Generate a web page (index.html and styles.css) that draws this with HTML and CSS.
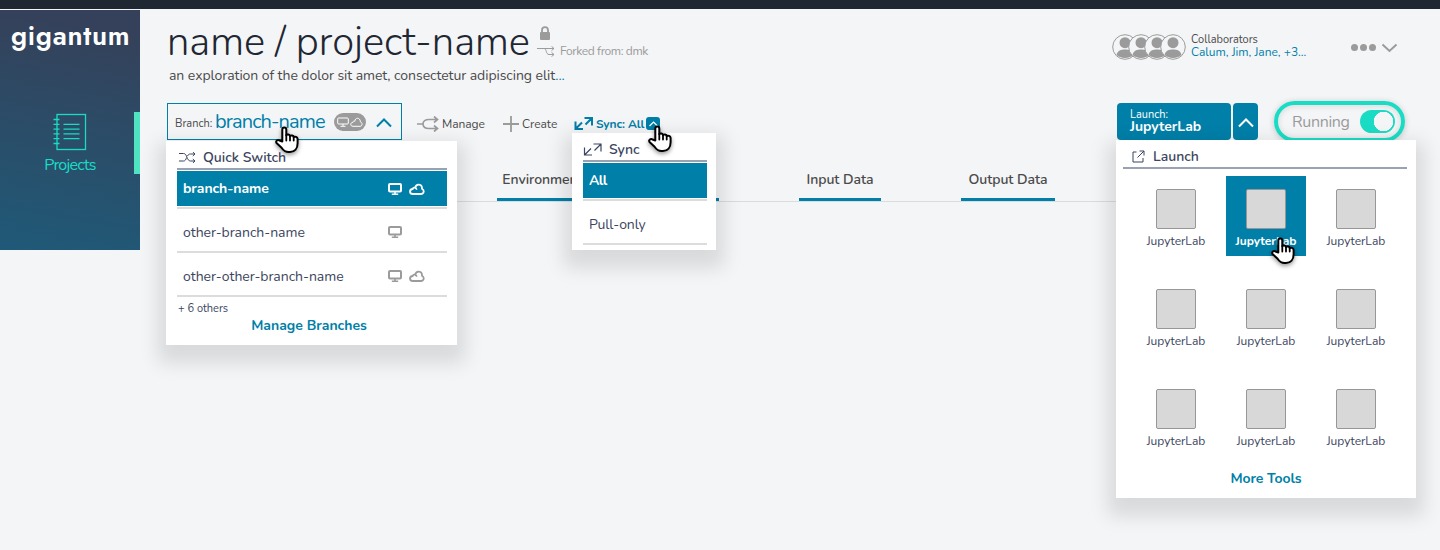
FILE: index.html
```html
<!DOCTYPE html>
<html lang="en">
<head>
<meta charset="utf-8">
<title>Gigantum</title>
<link rel="stylesheet" href="styles.css">
</head>
<body>
<svg class="defs" width="0" height="0">
  <symbol id="hand" viewBox="0 0 28 32"><path d="M8.300 15.500V3.400a2 2 0 0 1 4 0V9.200c1-1.300 3.400-1 3.700.8 1.200-1 3.400-.6 3.700 1 1.300-.7 3.700-.2 3.900 1.900v4.300c0 5.200-3 8.800-7.700 8.800h-1.300c-3.300 0-5.400-1.800-7-4.300L2.500 17c-1.200-2 1.300-4 3-2.500z" fill="#fff" stroke="#000" stroke-width="2" stroke-linejoin="round"/><path d="M12.300 9v5.500M16 10v4.500M19.700 11v3.500" stroke="#000" stroke-width="1.800" stroke-linecap="round"/></symbol>
  <symbol id="screen" viewBox="0 0 14 12"><rect x="1" y="1" width="12" height="7.500" rx="1" fill="none" stroke="currentColor" stroke-width="2"/><path d="M7 8v3M3.800 11.200h6.400" stroke="currentColor" stroke-width="1.600"/></symbol>
  <symbol id="cloud" viewBox="0 0 16 12"><path d="M4 11c-3.800 0-4-4.700-.3-5C4 4.800 5 4.200 6.200 4.800 7 .300 13.200.300 13 5.800c2.700 1.400 2 5.200-1 5.200z" fill="none" stroke="currentColor" stroke-width="1.800"/><path d="M6.200 4.800c1 .3 1.500 1 1.500 2" fill="none" stroke="currentColor" stroke-width="1.500"/></symbol>
  <symbol id="user" viewBox="0 0 26 26"><circle cx="13" cy="13" r="12.300" fill="#f4f5f7" stroke="#9b9b9b" stroke-width="1"/><circle cx="13" cy="8.700" r="5.500"/><path d="M4.500 21c1-4.500 4.500-5.500 8.500-5.500s7.500 1 8.500 5.500c-4.500 4-12.500 4-17 0z"/></symbol>
  <symbol id="arrows" viewBox="0 0 19 13"><path d="M1.500 4.500V12H9M1.500 12l6.500-6.500M10.500 1H18v7.500M18 1l-6.500 6.500" fill="none" stroke="currentColor"/></symbol>
</svg>
<div class="topbar"></div>
<div class="page">
  <nav class="side">
    <div class="logo">gigantum</div>
    <div class="side-item">
      <svg width="34" height="38" viewBox="0 0 34 38" fill="none" stroke="#1adcc4" stroke-width="1.300"><rect x="4" y="1.500" width="28.500" height="35"/><path d="M.5 6.500h6M.5 11.300h6M.5 16.100h6M.5 20.900h6M.5 25.700h6M.5 30.500h6M10.500 11.300h16M10.500 16.100h16M10.500 20.900h16M10.500 25.700h16"/></svg>
      <span>Projects</span>
    </div>
  </nav>
  <main>
    <header>
      <div class="titles">
        <div class="title-row">
          <h1>name / project-name</h1>
          <div class="meta">
            <svg class="lock" width="12" height="15" viewBox="0 0 12 15"><rect x="1" y="6" width="10" height="8" rx="1" fill="#9b9b9b"/><path d="M3 7V4.200a3 3 0 0 1 6 0V7" fill="none" stroke="#9b9b9b" stroke-width="1.800"/></svg>
            <div class="fork"><svg width="18" height="11" viewBox="0 0 18 11" fill="none" stroke="#9b9b9b"><path d="M0 2.500h17M14.500.3L17 2.500l-2.500 2.200M7 2.500c3 0 1.500 6 5 6h5M14.500 6.300L17 8.500l-2.500 2.200"/></svg><span>Forked from: dmk</span></div>
          </div>
        </div>
        <p class="desc">an exploration of the dolor sit amet, consectetur adipiscing elit<a>...</a></p>
      </div>
      <div class="people">
        <div class="avatars"><svg><use href="#user"/></svg><svg><use href="#user"/></svg><svg><use href="#user"/></svg><svg><use href="#user"/></svg></div>
        <div class="names"><span class="collab">Collaborators</span><a>Calum, Jim, Jane, +3...</a></div>
        <svg class="more" width="48" height="12" viewBox="0 0 48 12" fill="#9b9b9b"><circle cx="4.500" cy="5.500" r="3.500"/><circle cx="13.500" cy="5.500" r="3.500"/><circle cx="22.500" cy="5.500" r="3.500"/><path d="M32.500 2.500L39.500 9l7-6.500" fill="none" stroke="#9b9b9b" stroke-width="2"/></svg>
      </div>
    </header>
    <div class="toolbar">
      <div class="branch">
        <span class="blabel">Branch:</span><span class="bname">branch-name</span>
        <span class="pill"><svg width="12" height="10" viewBox="0 0 12 10" fill="none" stroke="#fff"><rect x=".7" y="1" width="10.600" height="6" rx="1"/><path d="M6 7v2M3.500 9.300h5"/></svg><svg width="13" height="10" viewBox="0 0 13 10" fill="none" stroke="#fff"><path d="M3 9.300C0 9.300 0 5.500 3 5.300 3 4.200 4 4 4.800 4.300 5 0 10.500.300 10.300 4.800c2.600.8 2.200 4.500-.3 4.500z"/></svg></span>
        <svg class="bchev" width="16" height="10" viewBox="0 0 16 10" fill="none" stroke="#007fa8" stroke-width="2"><path d="M1 8.500l7-7 7 7"/></svg>
        <section class="menu quick">
          <h2 class="mhead"><svg width="17" height="11" viewBox="0 0 17 11" fill="none" stroke="#3b4560"><path d="M0 1.500h4.500c4 0 3 7.500 7 7.500H16M0 9h4.500c1.800 0 2.500-1.500 3-3.500M8.500 4c.8-1.500 1.500-2 3-2H16M13.800 0L16 2l-2.200 2M13.800 7L16 9l-2.200 2"/></svg><span>Quick Switch</span></h2>
          <div class="opt on"><span>branch-name</span><svg class="ic"><use href="#screen"/></svg><svg class="ic c"><use href="#cloud"/></svg></div>
          <div class="opt"><span>other-branch-name</span><svg class="ic"><use href="#screen"/></svg><i class="c"></i></div>
          <div class="opt"><span>other-other-branch-name</span><svg class="ic"><use href="#screen"/></svg><svg class="ic c"><use href="#cloud"/></svg></div>
          <p class="others">+ 6 others</p>
          <a class="link">Manage Branches</a>
        </section>
        <svg class="hand h1c"><use href="#hand"/></svg>
      </div>
      <div class="act manage"><svg width="22" height="16" viewBox="0 0 22 16" fill="none" stroke="#9b9b9b" stroke-width="1.700"><path d="M0 8h6M20 3.500h-8c-3.500 0-6 1.500-6 4.500s2.500 4.500 6 4.500h8M17 .500l3.500 3-3.500 3M17 9.500l3.500 3-3.500 3"/></svg><span>Manage</span></div>
      <div class="act create"><svg width="16" height="16" viewBox="0 0 16 16" stroke="#9b9b9b" stroke-width="1.800"><path d="M8 0v16M0 8h16"/></svg><span>Create</span></div>
      <div class="act sync"><svg width="19" height="13" stroke-width="2"><use href="#arrows"/></svg><span>Sync: All</span><b class="sq"><svg width="9" height="6" viewBox="0 0 9 6" fill="none" stroke="#fff" stroke-width="1.200"><path d="M.5 5l4-4 4 4"/></svg></b>
        <section class="menu syncmenu">
          <h2 class="mhead"><svg width="19" height="13" stroke-width="1.200"><use href="#arrows"/></svg><span>Sync</span></h2>
          <div class="opt on"><span>All</span></div>
          <div class="opt"><span>Pull-only</span></div>
        </section>
        <svg class="hand h2c"><use href="#hand"/></svg>
      </div>
      <div class="launch">
        <div class="lbtn"><span class="l1">Launch:</span><span class="l2">JupyterLab</span></div>
        <div class="lchev"><svg width="16" height="10" viewBox="0 0 16 10" fill="none" stroke="#fff" stroke-width="2"><path d="M1 8.500l7-7 7 7"/></svg></div>
        <section class="menu tools">
          <h2 class="mhead"><svg width="13" height="13" viewBox="0 0 13 13" fill="none" stroke="#3b4560"><path d="M4.500 2H1v10h10V8M7.500 1H12v4.500M12 1L5.500 7.500"/></svg><span>Launch</span></h2>
          <div class="grid">
            <div class="tool"><i></i><span>JupyterLab</span></div><div class="tool on"><i></i><span>JupyterLab</span></div><div class="tool"><i></i><span>JupyterLab</span></div>
            <div class="tool"><i></i><span>JupyterLab</span></div><div class="tool"><i></i><span>JupyterLab</span></div><div class="tool"><i></i><span>JupyterLab</span></div>
            <div class="tool"><i></i><span>JupyterLab</span></div><div class="tool"><i></i><span>JupyterLab</span></div><div class="tool"><i></i><span>JupyterLab</span></div>
          </div>
          <a class="link">More Tools</a>
        </section>
        <svg class="hand h3c"><use href="#hand"/></svg>
      </div>
      <div class="status"><span>Running</span><i class="switch"></i></div>
    </div>
    <div class="tabs">
      <span class="tab env">Environment</span><span class="tab code">Code</span><span class="tab input">Input Data</span><span class="tab output">Output Data</span>
    </div>
  </main>
</div>
</body>
</html>
```
FILE: styles.css
```css
* { box-sizing: border-box; }
body { margin: 0; background: #f4f5f7; font: 14px/20px Nunito, Lato, "Noto Sans", sans-serif; color: #4a4a4a; overflow: hidden; height: 550px; }
h1, h2, p { margin: 0; font-weight: 400; }
.defs { position: absolute; }
.topbar { height: 9px; background: #1f2733; margin-bottom: 1px; }
.page { display: flex; }
.side { width: 140px; height: 240px; background: linear-gradient(190deg, #35415a 10%, #1f5a78 100%); display: flex; flex-direction: column; }
.logo { padding: 9px 0 0 11px; height: 102px; color: #fff; font-family: Jost, Futura, Outfit, Urbanist, Quicksand, Nunito, Lato, sans-serif; font-size: 27px; line-height: 34px; font-weight: 600; letter-spacing: .7px; white-space: nowrap; }
.side-item { height: 62px; border-right: 6px solid #50e3c2; display: flex; flex-direction: column; align-items: center; color: #1adcc4; font-size: 16px; letter-spacing: -.75px; padding: 1px 0 0 6px; }
.side-item svg { flex: none; }
.side-item span { line-height: 24px; padding-top: 2px; }
main { flex: 1; min-width: 0; padding-left: 27px; }
header { display: flex; justify-content: space-between; height: 93px; }
.title-row { display: flex; height: 56px; }
h1 { font-size: 40px; line-height: 64px; font-weight: 300; letter-spacing: -.05px; color: #1f2733; white-space: nowrap; width: 370px; }
.meta { color: #9b9b9b; font-size: 12px; padding-top: 16px; letter-spacing: -.37px; }
.lock { display: block; margin-left: 2px; }
.fork { display: flex; align-items: center; gap: 5px; white-space: nowrap; }
.desc { padding-left: 2px; white-space: nowrap; letter-spacing: -.06px; }
.desc a, .names a { color: #007fa8; }
.people { display: flex; padding: 23px 42px 0 0; font-size: 12px; }
.avatars { display: flex; padding-top: 1px; height: 27px; }
.avatars svg { width: 26px; height: 26px; fill: #9b9b9b; margin-right: -10px; }
.names { display: flex; flex-direction: column; margin-left: 15px; line-height: 13px; width: 159px; white-space: nowrap; }
.collab { font-size: 11px; }
.more { margin-top: 9px; }
.toolbar { display: flex; height: 37px; align-items: flex-start; white-space: nowrap; }
.branch { position: relative; width: 235px; height: 37px; border: 1px solid #007fa8; display: flex; align-items: center; padding-left: 7px; }
.blabel { font-size: 11px; padding-top: 5px; width: 40px; }
.bname { font-size: 20px; letter-spacing: -.88px; color: #007fa8; width: 119px; }
.pill { background: #9b9b9b; border-radius: 9px; width: 32px; height: 18px; display: flex; align-items: center; justify-content: center; gap: 1px; }
.bchev { margin: 3px 0 0 10px; }
.menu { position: absolute; z-index: 2; background: #fff; box-shadow: 0 10px 18px 8px rgba(0,0,0,.115); color: #3b4560; }
.mhead { display: flex; align-items: center; font-size: 14px; font-weight: 600; border-bottom: 2px solid #9aa1b0; margin-bottom: 1px; }
.quick { left: -2px; top: 37px; width: 291px; height: 204px; padding: 0 10px 0 11px; }
.quick .mhead { height: 29px; padding: 6px 0 0 2px; gap: 7px; }
.opt { display: flex; align-items: center; height: 44px; border-bottom: 2px solid #dcdcdc; padding: 5px 0 0 6px; letter-spacing: -.03px; }
.opt svg { margin-top: -1px; }
.opt.on { height: 38px; background: #007fa8 content-box; color: #fff; font-weight: 700; background-clip: padding-box; box-shadow: inset 0 -1px #fff; padding-top: 0; }
.opt > span { flex: 1; }
.ic { width: 14px; height: 12px; color: #9b9b9b; }
.on .ic { color: #fff; }
.ic.c { width: 16px; }
.c { width: 16px; margin: 0 22px 0 7px; }
.others { font-size: 11px; line-height: 16px; padding: 4px 0 0 1px; }
.link { display: block; text-align: center; color: #007fa8; font-weight: 700; }
.quick .others + .link { padding-right: 6px; margin-top: -1px; }
.hand { position: absolute; z-index: 4; width: 28px; height: 32px; filter: drop-shadow(0 2px 2px rgba(0,0,0,.4)); }
.h1c { left: 106px; top: 22px; }
.act { display: flex; align-items: center; height: 37px; font-size: 12px; padding-top: 4px; gap: 3px; letter-spacing: -.05px; }
.manage { margin-left: 15px; width: 86px; }
.create { width: 71px; }
.sync { position: relative; color: #007fa8; font-weight: 700; gap: 2px; letter-spacing: -.12px; }
.sync > svg:first-child { margin-top: -1px; }
.sync > span { margin-left: 1px; }
.sq { background: #007fa8; border-radius: 3px; width: 14px; height: 13px; display: flex; align-items: center; justify-content: center; }
.syncmenu { left: -2px; top: 30px; width: 144px; height: 117px; padding: 0 9px 0 11px; font-weight: 400; }
.syncmenu .mhead { height: 29px; padding: 5px 0 0 0; gap: 7px; letter-spacing: 0; }
.syncmenu .mhead span { padding-top: 1px; }
.syncmenu .opt { font-size: 14px; letter-spacing: -.15px; }
.syncmenu .on { letter-spacing: -.6px; }
.h2c { left: 73px; top: 22px; }
.launch { position: relative; margin-left: auto; display: flex; gap: 2px; }
.lbtn { width: 114px; height: 37px; background: #007fa8; border-radius: 4px; color: #fff; display: flex; flex-direction: column; padding: 5px 0 0 13px; line-height: 12px; }
.l1 { font-size: 11px; line-height: 13px; }
.l2 { font-weight: 700; }
.lchev { width: 25px; height: 37px; background: #007fa8; border-radius: 4px; display: flex; align-items: center; justify-content: center; padding-top: 3px; }
.tools { left: -1px; top: 37px; width: 300px; height: 358px; }
.tools .mhead { margin: 0 9px 0 7px; height: 29px; padding: 6px 0 0 9px; gap: 8px; }
.grid { display: grid; grid-template-columns: repeat(3, 80px); grid-auto-rows: 80px; gap: 20px 10px; padding: 7px 0 0 20px; }
.tool { display: flex; flex-direction: column; align-items: center; font-size: 12px; line-height: 14px; padding-top: 13px; }
.tool i { width: 40px; height: 40px; background: #d8d8d8; border: 1px solid #979797; border-radius: 2px; margin-bottom: 5px; }
.tool.on { background: #007fa8; color: #fff; font-weight: 700; }
.tools .link { padding-top: 13px; letter-spacing: -.07px; }
.h3c { left: 153px; top: 134px; }
.status { margin: -2px 35px 0 16px; width: 131px; height: 41px; border: 4px solid #1adcc4; border-radius: 21px; display: flex; align-items: center; padding-left: 14px; font-size: 16px; letter-spacing: -.35px; color: #9b9b9b; box-shadow: 0 1px 6px rgba(0,0,0,.2), inset 0 1px 6px rgba(0,0,0,.12); }
.status span { width: 68px; }
.switch { width: 35px; height: 23px; border-radius: 12px; background: radial-gradient(circle at 23.500px 11.500px, #f4f5f7 9.500px, #1adcc4 10px); }
.tabs { display: flex; height: 62px; margin: 0 35px 0 0; padding: 29px 0 0 330px; border-bottom: 1px solid #d9dbde; }
.tab { height: 32px; border-bottom: 3px solid #007fa8; padding-top: 1px; display: flex; justify-content: center; width: 82px; white-space: nowrap; font-weight: 600; letter-spacing: -.05px; }
.env { width: 94px; margin-right: 46px; padding-right: 3px; }
.code, .input { margin-right: 80px; }
.output { width: 94px; }
```
